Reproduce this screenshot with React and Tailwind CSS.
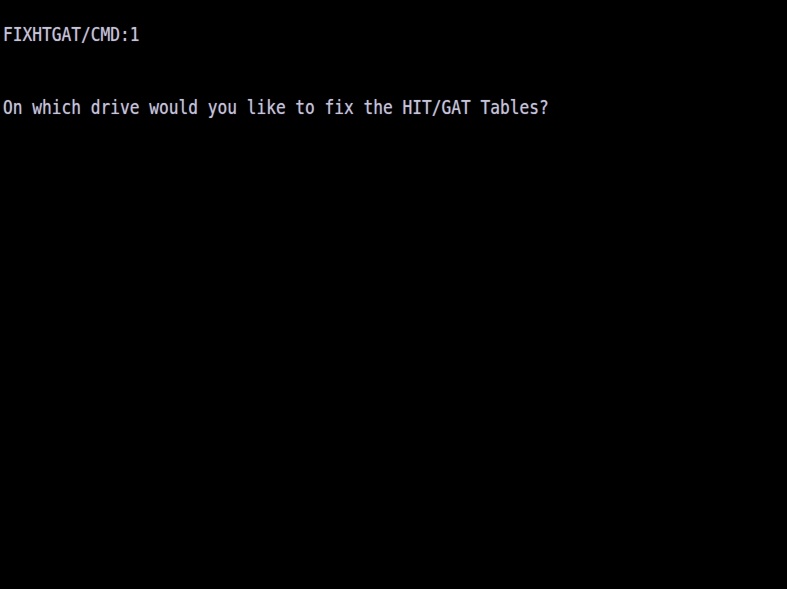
export default function App() {
  const rows = Array.from({ length: 24 }, () => "");
  rows[1] = "FIXHTGAT/CMD:1";
  rows[4] = "On which drive would you like to fix the HIT/GAT Tables?";
  return (
    <div className="w-[787px] h-[589px] bg-black overflow-hidden pl-[3px] pt-0 font-['DejaVu_Sans_Mono',monospace] text-[16.2px] text-[#c6c4d8]">
      <div className="-mt-[2px]">
        {rows.map((r, i) => (
          <div
            key={i}
            className="h-[24.54px] leading-[24.54px] whitespace-pre origin-center scale-y-[1.2] [text-shadow:0_0_1px_#6f6d88]"
          >
            {r}
          </div>
        ))}
      </div>
    </div>
  );
}
